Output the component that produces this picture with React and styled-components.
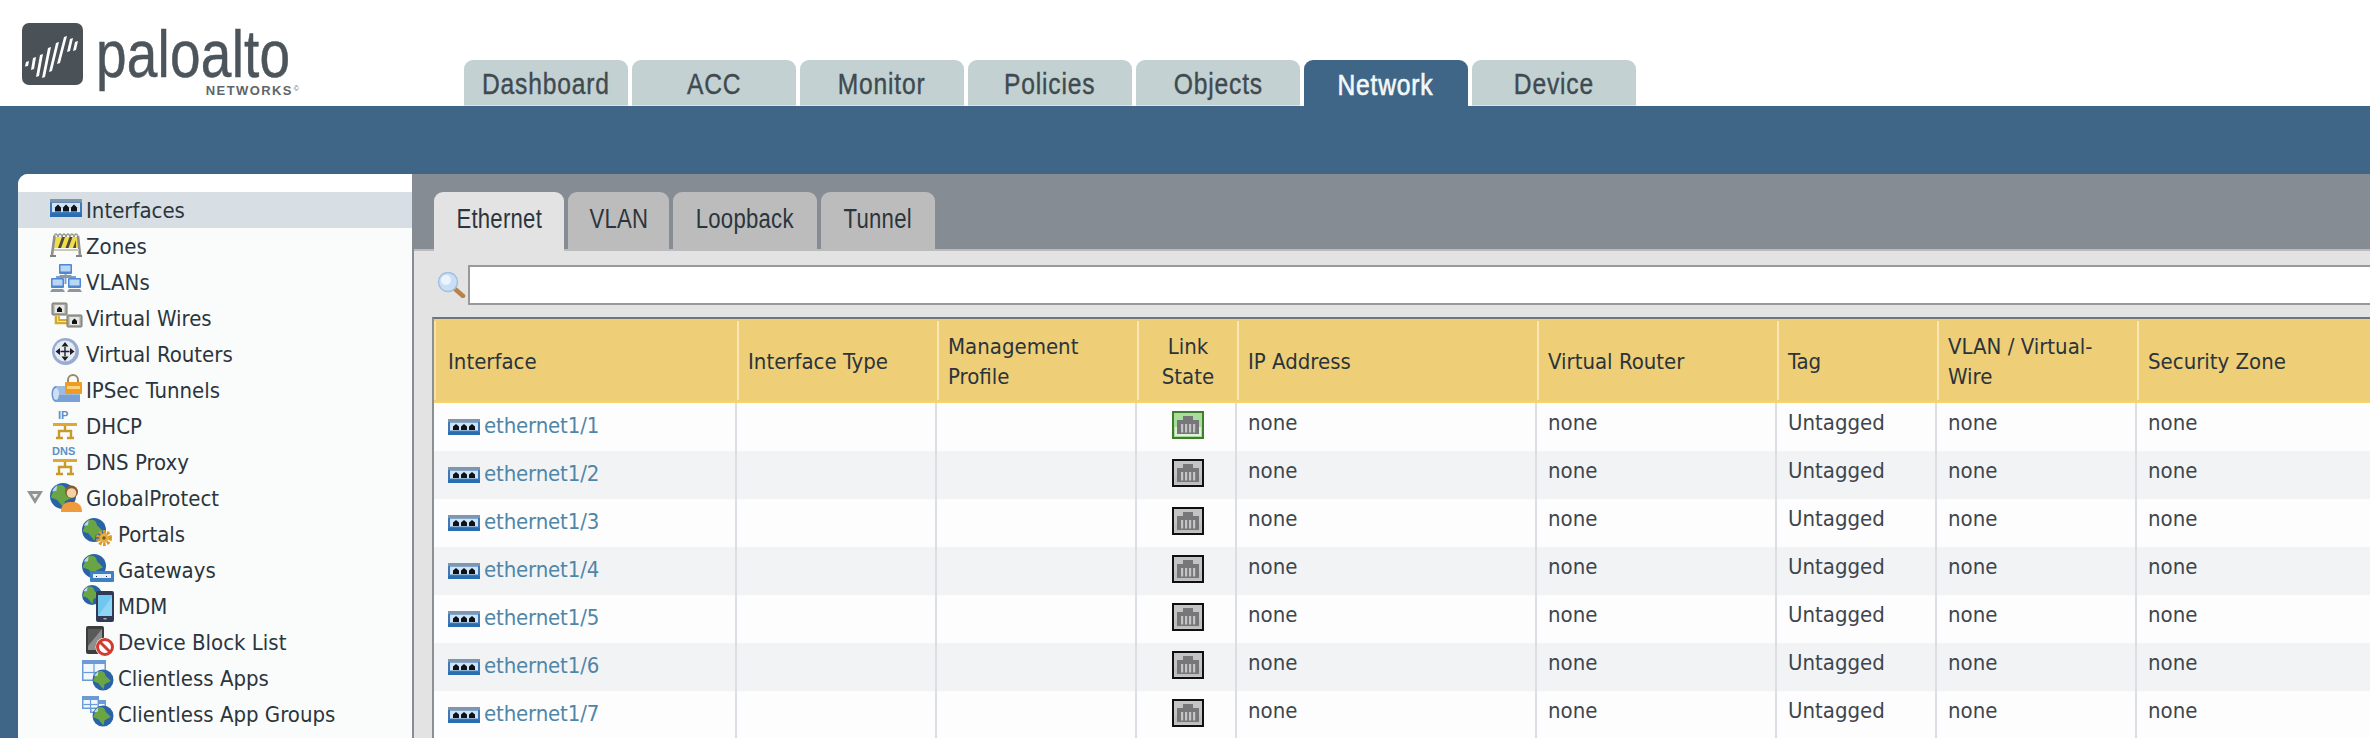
import React from 'react';
import styled, { createGlobalStyle } from 'styled-components';

const Global = createGlobalStyle`
  html, body { margin: 0; padding: 0; background: #3f6686; }
  * { box-sizing: border-box; }
`;
const FONT = `"DejaVu Sans Condensed", "DejaVu Sans", sans-serif`;
const ARIAL = `"Liberation Sans", sans-serif`;

const Page = styled.div`
  width: 2370px; height: 738px; overflow: hidden; display: flex; flex-direction: column;
  background: #3f6686; font-family: ${FONT}; color: #2c353c;
`;
const Header = styled.header`
  height: 106px; background: #fff; display: flex; align-items: flex-end; flex: none;
`;
const Logo = styled.div`
  width: 464px; height: 106px; display: flex; padding: 23px 0 0 22px; flex: none;
`;
const LogoWords = styled.div`
  display: flex; flex-direction: column; width: 203px; margin-left: 13px; color: #4c555b;
`;
const Wordmark = styled.div`
  font-family: ${ARIAL}; font-size: 67px; line-height: 62px; height: 63px; letter-spacing: 0.3px;
  -webkit-text-stroke: 0.5px currentColor;
  white-space: nowrap; transform: scaleX(0.82); transform-origin: left center;
`;
const Submark = styled.div`
  font-family: ${ARIAL}; font-weight: 700; font-size: 13px; line-height: 10px;
  letter-spacing: 1.4px; color: #5d666b; align-self: flex-end; white-space: nowrap;
  sup { font-size: 7px; font-weight: 400; line-height: 0; vertical-align: 4px; margin-left: 1px; letter-spacing: 0; }
`;
const MainTabs = styled.nav` display: flex; gap: 4px; `;
const MainTab = styled.div`
  width: 164px; height: 46px; border-radius: 9px 9px 0 0; display: flex; align-items: center; justify-content: center;
  padding-top: 3px;
  font-family: ${ARIAL}; font-size: 30px; letter-spacing: 1px;
  -webkit-text-stroke: ${p => p.$active ? '0.7px' : '0.4px'} currentColor;
  background: ${p => p.$active ? '#3f6686' : '#c3d1d2'}; color: ${p => p.$active ? '#f4f7f9' : '#3f4a50'};
  border-bottom: ${p => p.$active ? 'none' : '1px solid #dde5e5'};
`;
const Squeezed = styled.span`
  display: inline-block; white-space: nowrap; transform: scaleX(0.82);
`;
const Band = styled.div` height: 68px; background: #3f6686; flex: none; `;
const Main = styled.div` flex: 1; display: flex; padding-left: 18px; min-height: 0; `;
const Sidebar = styled.aside`
  width: 394px; flex: none; background: #fafcfc; border-top-left-radius: 10px; padding-top: 18px;
  box-shadow: inset 0 18px 0 #fff;
  overflow: hidden;
`;
const NavRow = styled.div`
  height: 36px; display: flex; align-items: center; position: relative; white-space: nowrap;
  padding-left: ${p => p.$level ? 64 : 32}px; gap: 4px; font-size: 22px;
  background: ${p => p.$selected ? '#d7dfe5' : 'transparent'};
  svg { flex: none; overflow: visible; align-self: flex-start; margin-top: 2px; }
`;
const IfaceSlot = styled.span`
  width: 32px; height: 36px; flex: none; display: flex;
  svg { margin-top: 7px; }
`;
const Expander = styled.svg`
  position: absolute; left: 8px; top: 8px;
`;
const Panel = styled.section`
  flex: 1; background: #868c94; display: flex; flex-direction: column; min-width: 0;
`;
const SubTabs = styled.div`
  height: 75px; flex: none; display: flex; align-items: flex-start; gap: 4px; padding: 18px 0 0 22px;
`;
const SubTab = styled.div`
  width: ${p => p.$w}px; height: ${p => p.$active ? 59 : 57}px; position: relative; z-index: 1;
  border-radius: 9px 9px 0 0; display: flex; align-items: center; justify-content: center; padding-bottom: ${p => p.$active ? 5 : 3}px;
  font-family: ${ARIAL}; font-size: 27px; letter-spacing: 0.3px; color: #2c353c;
  background: ${p => p.$active ? '#e3e3e3' : '#bcbcbc'};
`;
const Content = styled.div`
  flex: 1; margin-left: 2px; background: #e3e3e3; border-top: 2px solid #bcbcbc; min-height: 0;
`;
const SearchRow = styled.div`
  display: flex; align-items: center; height: 40px; margin-top: 14px; padding-left: 23px; gap: 2px;
`;
const SearchInput = styled.div`
  flex: 1; height: 40px; background: #fff; border: 2px solid #999; border-right: none;
`;
const Table = styled.div`
  margin: 12px 0 0 18px; border-top: 2px solid #6f757a; border-left: 2px solid #8b9094;
`;
const HeadRow = styled.div`
  display: grid; grid-template-columns: 305px 200px 200px 100px 300px 240px 160px 200px 1fr;
  height: 84px; background: #efce78; border-bottom: 2px solid #f8d368; padding: 2px 0 1px 0;
`;
const HeadCell = styled.div`
  display: flex; align-items: center; line-height: 30px; font-size: 22px; color: #2a343b;
  padding-top: 2px;
  padding-left: ${p => p.$first ? 14 : 9}px;
  justify-content: ${p => p.$center ? 'center' : 'flex-start'};
  text-align: ${p => p.$center ? 'center' : 'left'};
  ${p => p.$center ? 'padding-left: 0;' : ''}
  ${p => p.$first ? 'box-shadow: inset 2px 0 0 #f8e2a6;' : ''}
  border-right: 2px solid #f9e6b4;
  &:last-child { border-right: none; }
`;
const BodyRow = styled.div`
  display: grid; grid-template-columns: 303px 200px 200px 100px 300px 240px 160px 200px 1fr; height: 48px;
  background: ${p => p.$alt ? '#f2f3f5' : '#fdfdfd'};
`;
const Cell = styled.div`
  border-right: 2px solid #dbdee2; font-size: 22px; color: #3d464d; line-height: 40px; padding-left: ${p => p.$first ? 14 : 11}px;
  &:last-child { border-right: none; }
`;
const IfaceCell = styled(Cell)`
  display: flex; align-items: flex-start; gap: 4px; line-height: 45px;
  svg { margin-top: 16px; flex: none; }
`;
const IfaceLink = styled.span` color: #4f86a8; letter-spacing: -0.15px; `;
const LinkCell = styled(Cell)`
  padding: 8px 0 0 0; display: flex; justify-content: center;
  svg { margin-left: 4px; }
`;

const Globe = ({ cx = 12, cy = 12, r = 12 }) => (
  <g>
    <circle cx={cx} cy={cy} r={r} fill="#2a62a6" />
    <path d={`M${cx - r * .55} ${cy - r * .8} q${r * .7} -${r * .2} ${r * .8} ${r * .4} l${r * .5} ${r * .5} l-${r * .6} ${r * .3} l-${r * .1} ${r * .5} l-${r * .5} -${r * .6} l-${r * .5} -${r * .2} z`} fill="#6aa544" />
    <path d={`M${cx - r * .85} ${cy - r * .35} a${r * .9} ${r * .9} 0 0 1 ${r * .4} -${r * .45} l-${r * .05} ${r * .4} z`} fill="#bcd8ef" />
  </g>
);

const I = ({ children }) => <svg width="32" height="32" viewBox="0 0 32 32">{children}</svg>;

const IfaceGlyph = ({ h = 18 }) => (
  <svg width="32" height={h} viewBox="0 0 32 18" preserveAspectRatio="none">
    <rect width="32" height="18" rx="1" fill="#3a79bd" />
    <rect width="32" height="3.5" fill="#8296a9" />
    <rect x="2" y="4" width="28" height="9" fill="#d2e3f3" />
    {[5, 13, 21].map(x => <path key={x} d="M0 8V4L3 1L6 4V8Z" transform={`translate(${x} 4.5)`} fill="#0e1216" />)}
    <rect y="14.5" width="32" height="3.5" fill="#2b6cb0" />
  </svg>
);

const Zones = () => <I>
  <path d="M4 7c1-4 3-4 4 0 1-4 3-4 4 0 1-4 3-4 4 0 1-4 3-4 4 0 1-4 3-4 4 0 1-4 3-4 4 0" stroke="#9a9a90" strokeWidth="1.6" fill="none" />
  <path d="M5 7h23l1 11H4z" fill="#f2dc48" />
  <path d="M8 18l4-11h3l-4 11zM15.500 18l4-11h3l-4 11zM23 18l3-8v8z" fill="#4a4a40" />
  <path d="M4.500 6L2 25M28 6l2 19" stroke="#8d8f88" strokeWidth="2.600" />
  <path d="M0 26h6M26 26h6" stroke="#808284" strokeWidth="2.200" />
  <path d="M4 20h25" stroke="#c9c9b6" strokeWidth="2" />
</I>;
const Mon = ({ x, y, w = 13, h = 10 }) => <g>
  <rect x={x} y={y} width={w} height={h} rx="1" fill="#4e86cf" />
  <rect x={x + 1.5} y={y + 1.5} width={w - 3} height={h - 4} fill="#b7d7f5" />
  <path d={`M${x + 1} ${y + h + 1}h${w - 2}l2 3h-${w + 2}z`} fill="#8f94a6" />
</g>;
const Vlans = () => <I>
  <path d="M15.500 8v10M7 14v-3h18v3" stroke="#7ba3d2" strokeWidth="2" fill="none" />
  <Mon x={9} y={-2} />
  <Mon x={1} y={12} />
  <Mon x={18} y={12} />
</I>;
const Port = ({ x, y }) => <g>
  <rect x={x} y={y} width="15" height="12" rx="1" fill="#a4a4a0" stroke="#77776f" />
  <rect x={x + 2.5} y={y + 2} width="10" height="8" fill="#e6e6e2" />
  <path d={`M${x + 5} ${y + 9}v-3l2.500-2.500 2.500 2.500v3z`} fill="#111" />
</g>;
const Wires = () => <I>
  <path d="M6 14v7h11" stroke="#d7a928" strokeWidth="2.600" fill="none" />
  <path d="M9 14v4h8" stroke="#d7a928" strokeWidth="1.800" fill="none" />
  <Port x={2} y={1} />
  <Port x={17} y={13} />
</I>;
const Router = () => <I>
  <circle cx="15.500" cy="13.500" r="13.500" fill="#98abd0" />
  <circle cx="15" cy="13" r="10.500" fill="#e6ebf2" />
  <path d="M15 13.500h0M15 9v9M10.500 13.500h9" stroke="#1c1e22" strokeWidth="1.400" />
  <path d="M15 4l3.500 4.500h-7zM15 23l3.500-4.500h-7zM5.500 13.500L10 10v7zM24.500 13.500L20 10v7z" fill="#1c1e22" />
</I>;
const Ipsec = () => <I>
  <ellipse cx="6" cy="20" rx="4.500" ry="8" fill="#6a96cf" />
  <rect x="6" y="12" width="24" height="16" rx="2" fill="#9dbce2" />
  <rect x="6" y="21" width="24" height="7" fill="#7aa1d6" />
  <ellipse cx="6" cy="20" rx="3" ry="6" fill="#cfdff2" />
  <path d="M18 9V6a5 5 0 0 1 10 0v3" stroke="#9b8a68" strokeWidth="2" fill="none" />
  <rect x="15" y="8" width="17" height="12" rx="1" fill="#ef9c22" />
  <rect x="17" y="12" width="13" height="3" fill="#ffd27c" />
</I>;
const Net = ({ label, lx, fs }) => <I>
  <text x={lx} y="9" fontFamily='"Liberation Sans", sans-serif' fontWeight="700" fontSize={fs} fill="#5b8fc4">{label}</text>
  <rect x={3} y="13" width="24" height="3" fill="#dfa92e" />
  <path d="M15 16v4M9 27v-6h12v6M6 28h7M17 28h7" stroke="#c79a2a" strokeWidth="2.400" fill="none" />
</I>;
const Gp = () => <I>
  <Globe cx={13} cy={14} r={13} />
  <circle cx="21.500" cy="10" r="6.500" fill="#8a5a2c" />
  <circle cx="21.500" cy="11" r="4.800" fill="#f3d2a8" />
  <path d="M11 30c0-8 5-10 10.500-10S32 22 32 30z" fill="#ef9a3c" />
</I>;
const Portals = () => <I>
  <Globe />
  <circle cx="22" cy="20" r="6" fill="none" stroke="#d89a2a" strokeWidth="4" strokeDasharray="2.500 1.300" />
  <circle cx="22" cy="20" r="4.500" fill="#e6b040" />
  <circle cx="22" cy="20" r="1.800" fill="#7a5a20" />
</I>;
const Gateways = () => <I>
  <Globe />
  <rect x="8" y="17" width="24" height="11" rx="1" fill="#3f7fc4" />
  <rect x="11" y="20" width="18" height="4" fill="#e6eef8" />
  <path d="M14 23v-1h1v1zM24 23v-1h1v1z" fill="#223" />
</I>;
const Mdm = () => <I>
  <Globe cx={10} cy={5} r={10} />
  <rect x="14" y="1" width="18" height="31" rx="2" fill="#303a52" />
  <rect x="16" y="5" width="14" height="21" fill="#6fc6ef" />
  <path d="M16 26L30 7v19z" fill="#a8e0f6" opacity=".6" />
  <rect x="21.500" y="28" width="3" height="1.500" fill="#aab" />
</I>;
const Block = () => <I>
  <rect x="4" y="0" width="18" height="28" rx="2" fill="#3d3d3d" />
  <rect x="6" y="3" width="14" height="21" fill="#8e8e8e" />
  <path d="M6 3h14L6 20z" fill="#5a5a5a" />
  <circle cx="23" cy="21" r="9.500" fill="#fff" />
  <circle cx="23" cy="21" r="7.500" fill="none" stroke="#cf3b2e" strokeWidth="3" />
  <path d="M18 16l10 10" stroke="#cf3b2e" strokeWidth="3" />
</I>;
const Win = ({ x, y, w, h, cols = 2 }) => <g>
  <rect x={x} y={y} width={w} height={h} fill="#6a9bd6" />
  <rect x={x + 1.5} y={y + 4} width={w - 3} height={h - 5.5} fill="#f2f7fd" />
  <path d={`M${x + 1.5} ${y + (h + 2) / 2 + 1}h${w - 3}`} stroke="#6a9bd6" strokeWidth="1.200" />
  {Array.from({ length: cols - 1 }).map((_, i) => <path key={i} d={`M${x + (w / cols) * (i + 1)} ${y + 4}v${h - 5}`} stroke="#6a9bd6" strokeWidth="1.200" />)}
</g>;
const Apps = () => <I>
  <Win x={0} y={-2} w={24} h={21} />
  <Globe cx={21} cy={18} r={10.5} />
</I>;
const Groups = () => <I>
  <Win x={8} y={2} w={16} h={13} />
  <Win x={0} y={-2} w={17} h={13} />
  <Globe cx={21} cy={18} r={10.5} />
</I>;
const Qos = () => <I>
  <circle cx="12.500" cy="9" r="5" fill="#f4c63a" />
  <path d="M6 24v-8h13v8z" fill="#e2a92a" />
</I>;

const nav = [
  { t: 'Interfaces', i: <IfaceSlot><IfaceGlyph /></IfaceSlot>, s: true },
  { t: 'Zones', i: <Zones /> },
  { t: 'VLANs', i: <Vlans /> },
  { t: 'Virtual Wires', i: <Wires /> },
  { t: 'Virtual Routers', i: <Router /> },
  { t: 'IPSec Tunnels', i: <Ipsec /> },
  { t: 'DHCP', i: <Net label="IP" lx={8} fs={11} /> },
  { t: 'DNS Proxy', i: <Net label="DNS" lx={2} fs={11} /> },
  { t: 'GlobalProtect', i: <Gp />, x: true },
  { t: 'Portals', i: <Portals />, l: 1 },
  { t: 'Gateways', i: <Gateways />, l: 1 },
  { t: 'MDM', i: <Mdm />, l: 1 },
  { t: 'Device Block List', i: <Block />, l: 1 },
  { t: 'Clientless Apps', i: <Apps />, l: 1 },
  { t: 'Clientless App Groups', i: <Groups />, l: 1 },
];

const LinkIcon = ({ up }) => (
  <svg width="32" height="28" viewBox="0 0 32 28">
    <rect x="1" y="1" width="30" height="26" fill={up ? '#a9dd9c' : '#c4c4c4'} stroke={up ? '#3f7f2c' : '#101010'} strokeWidth="2" />
    <rect x="3" y="16" width="26" height="9" fill={up ? '#dff2d9' : '#bdbdbd'} />
    <path d="M5 9h6V5h10v4h6v14H5z" fill="#777779" />
    {[10, 14, 18, 22].map(x => <rect key={x} x={x - 1} y="13" width="2.200" height="8.500" fill="#c4c4c6" />)}
  </svg>
);

const mainTabs = ['Dashboard', 'ACC', 'Monitor', 'Policies', 'Objects', 'Network', 'Device'];
const subTabs = [['Ethernet', 130], ['VLAN', 101], ['Loopback', 144], ['Tunnel', 114]];
const heads = [
  { t: 'Interface', first: true }, { t: 'Interface Type' }, { t: <>Management<br />Profile</> },
  { t: <>Link<br />State</>, center: true }, { t: 'IP Address' }, { t: 'Virtual Router' }, { t: 'Tag' },
  { t: <>VLAN / Virtual-<br />Wire</> }, { t: 'Security Zone' },
];

export default function App() {
  return (
    <Page>
      <Global />
      <Header>
        <Logo>
          <svg width="61" height="62" viewBox="0 0 61 62">
            <rect width="61" height="62" rx="7" fill="#4a5258" />
            <path fill="#fff" d="M4 39l3-1-1 5-3 .5zM11 35l3-1-2 12-3 1zM18 32l3-1-4 22-3 1zM26 25l3-1-6 30-3 1zM34 20l3-1-7 29-3 1zM42 14l3-1-7 27-3 1zM48 16l3-1-3 13-3 1zM53 19l3-1-2 9-3 1z" />
          </svg>
          <LogoWords>
            <Wordmark>paloalto</Wordmark>
            <Submark>NETWORKS<sup>©</sup></Submark>
          </LogoWords>
        </Logo>
        <MainTabs>
          {mainTabs.map(t => <MainTab key={t} $active={t === 'Network'}><Squeezed>{t}</Squeezed></MainTab>)}
        </MainTabs>
      </Header>
      <Band />
      <Main>
        <Sidebar>
          {nav.map(n => (
            <NavRow key={n.t} $level={n.l} $selected={n.s}>
              {n.x && <Expander width="18" height="15" viewBox="0 0 18 15">
                <path d="M1 1h16L9 14z" fill="#8f9496" /><path d="M6 4h6L9 8.500z" fill="#eef0f0" />
              </Expander>}
              {n.i}
              <span>{n.t}</span>
            </NavRow>
          ))}
          <NavRow><Qos /></NavRow>
        </Sidebar>
        <Panel>
          <SubTabs>
            {subTabs.map(([t, w], i) => <SubTab key={t} $w={w} $active={i === 0}><Squeezed>{t}</Squeezed></SubTab>)}
          </SubTabs>
          <Content>
            <SearchRow>
              <svg width="29" height="26" viewBox="0 0 29 26">
                <path d="M18 17l8 7" stroke="#b9824a" strokeWidth="4.500" strokeLinecap="round" />
                <circle cx="11" cy="10" r="9.500" fill="#c9dff5" stroke="#a5c0de" strokeWidth="1.500" />
                <circle cx="9" cy="8" r="5" fill="#eaf4fd" />
              </svg>
              <SearchInput />
            </SearchRow>
            <Table>
              <HeadRow>
                {heads.map((h, i) => <HeadCell key={i} $first={h.first} $center={h.center}><span>{h.t}</span></HeadCell>)}
              </HeadRow>
              {[1, 2, 3, 4, 5, 6, 7].map(n => (
                <BodyRow key={n} $alt={n % 2 === 0}>
                  <IfaceCell $first><IfaceGlyph h={16} /><IfaceLink>ethernet1/{n}</IfaceLink></IfaceCell>
                  <Cell />
                  <Cell />
                  <LinkCell><LinkIcon up={n === 1} /></LinkCell>
                  <Cell>none</Cell>
                  <Cell>none</Cell>
                  <Cell>Untagged</Cell>
                  <Cell>none</Cell>
                  <Cell>none</Cell>
                </BodyRow>
              ))}
            </Table>
          </Content>
        </Panel>
      </Main>
    </Page>
  );
}
